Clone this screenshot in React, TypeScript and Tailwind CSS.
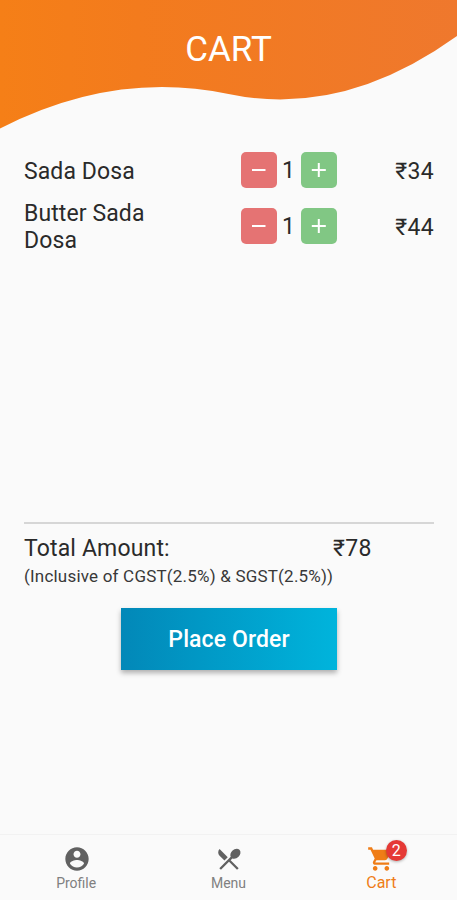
import { useState } from 'react';
import { MdRestaurantMenu, MdShoppingCart } from 'react-icons/md';

const initialItems = [
  { id: 1, name: 'Sada Dosa', price: 34, qty: 1 },
  { id: 2, name: 'Butter Sada Dosa', price: 44, qty: 1 },
];

function WaveHeader({ title }: { title: string }) {
  return (
    <header className="relative h-[129px] shrink-0">
      <svg className="absolute inset-0 h-full w-full" viewBox="0 0 457 129" preserveAspectRatio="none">
        <defs>
          <linearGradient id="wave" x1="0" y1="0" x2="1" y2="0">
            <stop offset="0" stopColor="#f57f17" />
            <stop offset="0.3" stopColor="#f37b1d" />
            <stop offset="1" stopColor="#ef782d" />
          </linearGradient>
        </defs>
        <path d="M0 0V128.5Q114 70 228.5 94Q343 118 457 36V0Z" fill="url(#wave)" />
      </svg>
      <h1 className="relative pt-[29px] text-center text-[35px] leading-[42px] text-white">{title}</h1>
    </header>
  );
}

function AccountIcon() {
  return (
    <svg viewBox="0 0 24 24" width="28" height="28" fill="currentColor">
      <path d="M12 2C6.48 2 2 6.48 2 12s4.48 10 10 10 10-4.48 10-10S17.52 2 12 2zm0 3c1.66 0 3 1.34 3 3s-1.34 3-3 3-3-1.34-3-3 1.34-3 3-3zm0 14.2c-2.5 0-4.71-1.28-6-3.22.03-1.99 4-3.08 6-3.08 1.99 0 5.97 1.09 6 3.08-1.29 1.94-3.5 3.22-6 3.22z" />
    </svg>
  );
}

function StepIcon({ plus }: { plus?: boolean }) {
  return (
    <svg viewBox="0 0 36 36" className="size-9" fill="none" stroke="currentColor" strokeWidth="2">
      <path d={plus ? 'M10.8 18h14M17.8 11v14' : 'M11 18h13.5'} />
    </svg>
  );
}

export default function App() {
  const [items, setItems] = useState(initialItems);

  const changeQty = (id: number, delta: number) =>
    setItems(prev => prev.map(i => (i.id === id ? { ...i, qty: Math.max(0, i.qty + delta) } : i)));

  const total = items.reduce((sum, i) => sum + i.price * i.qty, 0);
  const count = items.reduce((sum, i) => sum + i.qty, 0);

  return (
    <div className="flex h-[900px] w-[457px] flex-col overflow-hidden bg-[#fafafa] font-['Roboto',sans-serif] text-[#2a2a2a]">
      <WaveHeader title="CART" />

      <ul className="mr-[23px] ml-6 mt-[13px] h-[380px] shrink-0">
        {items.map(item => (
          <li key={item.id} className="flex h-14 items-center text-[23px] leading-[27px]">
            <span className="w-[150px] pt-[2px] tracking-[0.1px]">{item.name}</span>
            <div className="ml-[67px] flex w-24 items-center justify-between">
              <button
                type="button"
                aria-label="Remove one"
                onClick={() => changeQty(item.id, -1)}
                className="size-9 rounded-[5px] bg-[#e57373] text-white"
              >
                <StepIcon />
              </button>
              <span className="-ml-px pt-px">{item.qty}</span>
              <button
                type="button"
                aria-label="Add one"
                onClick={() => changeQty(item.id, 1)}
                className="size-9 rounded-[5px] bg-[#81c784] text-white"
              >
                <StepIcon plus />
              </button>
            </div>
            <span className="ml-auto pt-[2px] tracking-[0.3px]">₹{item.price}</span>
          </li>
        ))}
      </ul>

      <section className="mr-[23px] ml-6 flex flex-1 flex-col border-t-2 border-[#d6d6d6] pt-[11px]">
        <div className="flex text-[23px] leading-[27px]">
          <span className="w-[309px] tracking-[0.15px]">Total Amount:</span>
          <span className="tracking-[0.3px]">₹{total}</span>
        </div>
        <p className="mt-[5px] text-[17px] leading-[19px] tracking-[0.2px] whitespace-nowrap text-[#383838]">
          (Inclusive of CGST(2.5%) &amp; SGST(2.5%))
        </p>
        <button
          type="button"
          className="mt-[22px] ml-[97px] h-[62px] w-[216px] bg-linear-to-r from-[#0288b8] to-[#00b4dc] pt-[2px] text-[23px] font-medium tracking-[0.1px] text-white shadow-[0_3px_5px_rgba(0,0,0,0.3)]"
        >
          Place Order
        </button>
      </section>

      <nav className="grid h-[66px] shrink-0 grid-cols-3 border-t border-[#f2f2f2] text-[#808080]">
        <button type="button" className="flex flex-col items-center pt-[10px] text-[14px] leading-[17px]">
          <span className="ml-px text-[#616161]"><AccountIcon /></span>
          <span className="mt-[2px]">Profile</span>
        </button>
        <button type="button" className="flex flex-col items-center pt-[10px] text-[14px] leading-[17px]">
          <MdRestaurantMenu size={28} className="ml-px text-[#616161]" />
          <span className="mt-[2px]">Menu</span>
        </button>
        <button type="button" className="flex flex-col items-center pt-[10px] text-[16px] leading-[19px] text-[#ef7d17]">
          <span className="relative">
            <MdShoppingCart size={28} />
            <span className="absolute -top-[5px] left-[19px] flex size-[21px] items-center justify-center rounded-full bg-[#e53935] text-[16px] leading-none text-white shadow-[0_1px_3px_rgba(0,0,0,0.3)]">
              {count}
            </span>
          </span>
          <span className="ml-px">Cart</span>
        </button>
      </nav>
    </div>
  );
}
